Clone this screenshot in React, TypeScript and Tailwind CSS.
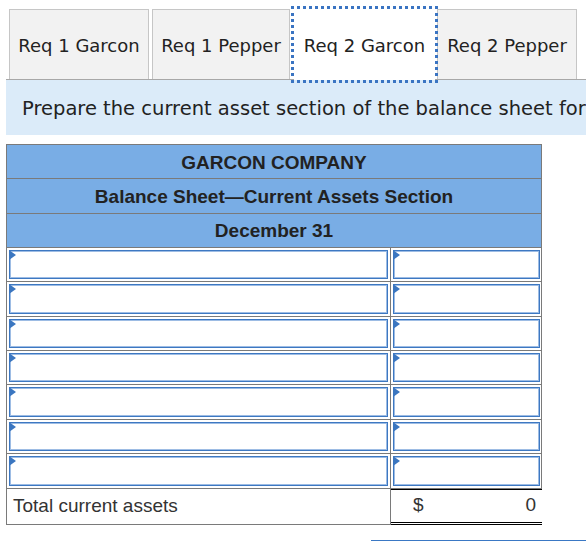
import type { ReactNode } from 'react'

const tabs = [
  { label: 'Req 1 Garcon', width: 'w-[140px]', gap: '' },
  { label: 'Req 1 Pepper', width: 'w-[138px]', gap: 'ml-[3px]' },
  { label: 'Req 2 Garcon', width: 'w-[141px]', gap: 'ml-[4px]', active: true },
  { label: 'Req 2 Pepper', width: 'w-[140px]', gap: 'ml-[2px]' },
]

const header = ['GARCON COMPANY', 'Balance Sheet\u2014Current Assets Section', 'December 31']

function EntryBox() {
  return (
    <div className="relative h-full w-full border border-[#3d78c2] bg-white shadow-[inset_0_0_0_1px_#9dbce4]">
      <span className="absolute left-[-1px] top-[-1px] h-0 w-0 border-y-[5px] border-l-[7px] border-y-transparent border-l-[#3b76c0]" />
    </div>
  )
}

function HeaderRow({ children }: { children: ReactNode }) {
  return (
    <div className="flex h-[34.3px] items-center justify-center border-b border-[#7a7a7a] bg-[#79ade5] pt-[3px] text-[19px] font-bold text-[#222]">
      {children}
    </div>
  )
}

export default function App() {
  return (
    <div className="h-[541px] w-[586px] overflow-hidden bg-white">
      {/* tab strip */}
      <div className="ml-[6px] flex h-[80px] items-end border-b border-[#a8a8a8] pl-[3px] font-['DejaVu_Sans',sans-serif] text-[18px] text-[#222]">
        {tabs.map((t) =>
          t.active ? (
            <div
              key={t.label}
              className={`${t.width} ${t.gap} relative z-10 -mb-px flex h-[71px] items-center justify-center bg-white pt-[2px] outline-[3px] outline-dotted outline-[#3a74c2]`}
            >
              {t.label}
            </div>
          ) : (
            <div
              key={t.label}
              className={`${t.width} ${t.gap} flex h-[70px] items-center justify-center border-x border-t border-[#c6c6c6] bg-[#f2f2f2] pt-[2px]`}
            >
              {t.label}
            </div>
          ),
        )}
      </div>

      {/* instruction */}
      <div className="ml-[6px] flex h-[55px] items-center overflow-hidden whitespace-nowrap bg-[#dbebf9] pl-[16px] pt-[3px] font-['DejaVu_Sans',sans-serif] text-[19.5px] text-[#222]">
        Prepare the current asset section of the balance sheet for Garcon Company.
      </div>

      {/* balance sheet */}
      <div className="ml-[6px] mt-[9px] w-[536px] font-['Liberation_Sans',Arial,sans-serif]">
        <div className="border-x border-t border-[#7a7a7a]">
          {header.map((h) => (
            <HeaderRow key={h}>{h}</HeaderRow>
          ))}
          {Array.from({ length: 7 }).map((_, i) => (
            <div key={i} className="flex h-[34.4px] border-b border-[#7a7a7a]">
              <div className="w-[384px] border-r border-[#7a7a7a] p-[2px]">
                <EntryBox />
              </div>
              <div className="flex-1 p-[2px] pr-px">
                <EntryBox />
              </div>
            </div>
          ))}
        </div>
        <div className="flex h-[36px] text-[19px] text-[#333]">
          <div className="flex w-[385px] items-center border-x border-b border-[#7a7a7a] pl-[6px]">
            Total current assets
          </div>
          <div className="flex flex-1 items-center justify-between border-b-[3px] border-t border-double border-t-black border-b-black pl-[22px] pr-[6px]">
            <span>$</span>
            <span>0</span>
          </div>
        </div>
      </div>

      {/* next section edge */}
      <div className="mt-[15px] flex justify-end">
        <div className="h-[4px] w-[215px] border-t-2 border-[#3a78c4]" />
      </div>
    </div>
  )
}
